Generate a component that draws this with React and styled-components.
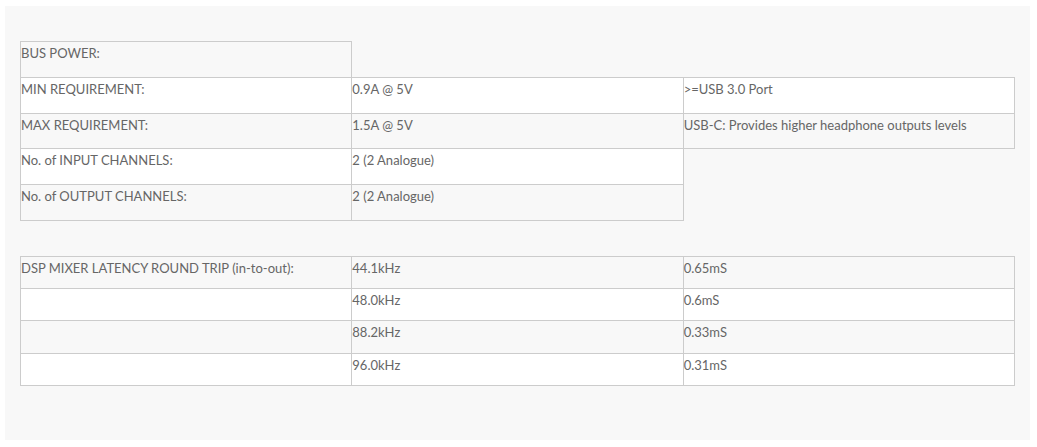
import styled, { createGlobalStyle } from "styled-components";

const GlobalStyle = createGlobalStyle`
    body {
        margin: 0;
        background: #ffffff;
        font-family: Lato, "Open Sans", sans-serif;
    }
`

const Panel = styled.div`
    margin: 6px 0 0 5px;
    width: 1025px;
    height: 434px;
    box-sizing: border-box;
    background-color: #f8f8f8;
    padding: 35px 15px 0 15px;
    display: flex;
    flex-direction: column;
    gap: 35px;
`

const SpecTable = styled.table`
    width: 995px;
    border-collapse: collapse;
    table-layout: fixed;
    color: #666666;
    font-size: 13px;
`

const Row = styled.tr`
    height: ${props => props.$tall ? '35.8px' : '32.2px'};
    background-color: ${props => props.$striped ? '#f8f8f8' : '#ffffff'};
`

const Cell = styled.td`
    border: 1px solid #cccccc;
    vertical-align: top;
    padding: 3px 0 0 0;
    line-height: 16px;
`

const powerRows = [
    ['BUS POWER:'],
    ['MIN REQUIREMENT:', '0.9A @ 5V', '>=USB 3.0 Port'],
    ['MAX REQUIREMENT:', '1.5A @ 5V', 'USB-C: Provides higher headphone outputs levels'],
    ['No. of INPUT CHANNELS:', '2 (2 Analogue)'],
    ['No. of OUTPUT CHANNELS:', '2 (2 Analogue)'],
]

const latencyRows = [
    ['DSP MIXER LATENCY ROUND TRIP (in-to-out):', '44.1kHz', '0.65mS'],
    ['', '48.0kHz', '0.6mS'],
    ['', '88.2kHz', '0.33mS'],
    ['', '96.0kHz', '0.31mS'],
]

const Table = ({ rows, tall }) => (
    <SpecTable>
        <colgroup>
            <col />
            <col />
            <col />
        </colgroup>
        <tbody>
            {rows.map((cells, index) => (
                <Row key={index} $tall={tall} $striped={index % 2 === 0}>
                    {cells.map((text, i) => <Cell key={i}>{text}</Cell>)}
                </Row>
            ))}
        </tbody>
    </SpecTable>
)

const App = () => {
    return (
        <>
            <GlobalStyle />
            <Panel>
                <Table rows={powerRows} tall />
                <Table rows={latencyRows} />
            </Panel>
        </>
    )
}

export default App;
